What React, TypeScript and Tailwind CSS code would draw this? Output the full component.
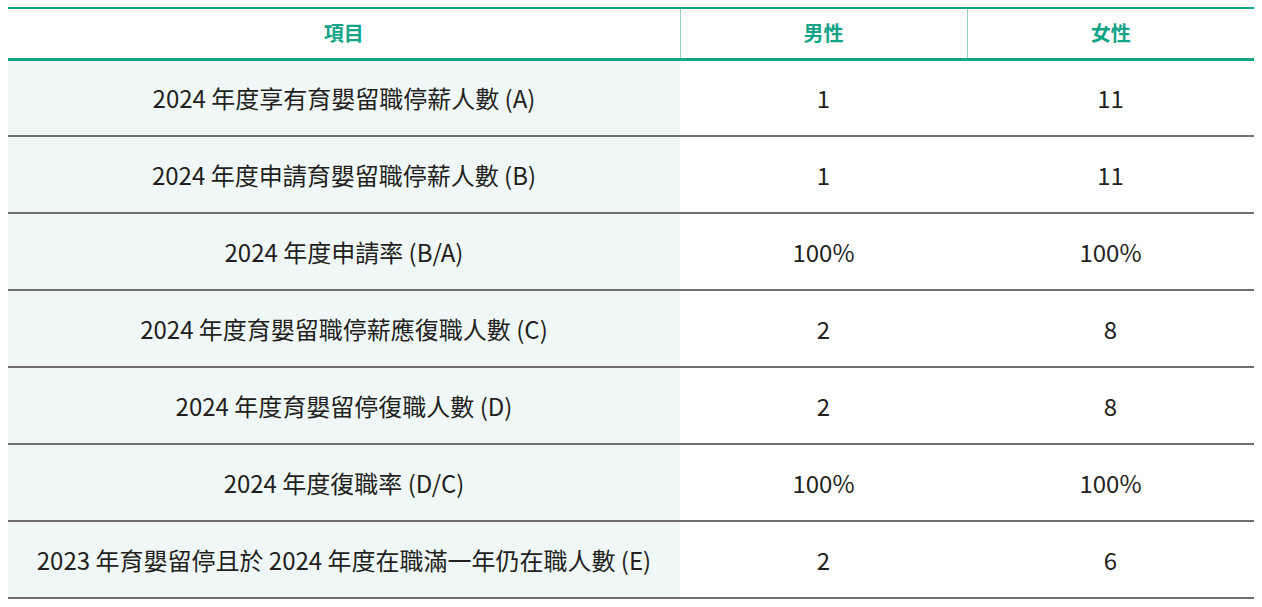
const rows = [
  { label: '2024 年度享有育嬰留職停薪人數 (A)', male: '1', female: '11' },
  { label: '2024 年度申請育嬰留職停薪人數 (B)', male: '1', female: '11' },
  { label: '2024 年度申請率 (B/A)', male: '100%', female: '100%' },
  { label: '2024 年度育嬰留職停薪應復職人數 (C)', male: '2', female: '8' },
  { label: '2024 年度育嬰留停復職人數 (D)', male: '2', female: '8' },
  { label: '2024 年度復職率 (D/C)', male: '100%', female: '100%' },
  { label: '2023 年育嬰留停且於 2024 年度在職滿一年仍在職人數 (E)', male: '2', female: '6' },
];

export default function App() {
  return (
    <div
      className="min-h-[607px] bg-white pl-[8px] pr-[8px] pt-[7px]"
      style={{ fontFamily: '"Noto Sans CJK TC", "Noto Sans", sans-serif' }}
    >
      <table className="w-[1246px] border-collapse table-fixed">
        <colgroup>
          <col className="w-[672px]" />
          <col className="w-[287px]" />
          <col className="w-[287px]" />
        </colgroup>
        <thead>
          <tr className="h-[51px] border-t-2 border-b-[3px] border-[#13a386] text-[20px] font-bold text-[#13a386]">
            <th className="text-center">項目</th>
            <th className="border-l border-[#93d5bb] text-center">男性</th>
            <th className="border-l border-[#93d5bb] text-center">女性</th>
          </tr>
        </thead>
        <tbody>
          {rows.map((row) => (
            <tr key={row.label} className="h-[77px] border-b-2 border-[#6f6f6f] text-[24px] text-[#231f20]">
              <td className="bg-[#eff8f6] text-center">{row.label}</td>
              <td className="text-center">{row.male}</td>
              <td className="text-center">{row.female}</td>
            </tr>
          ))}
        </tbody>
      </table>
    </div>
  );
}
